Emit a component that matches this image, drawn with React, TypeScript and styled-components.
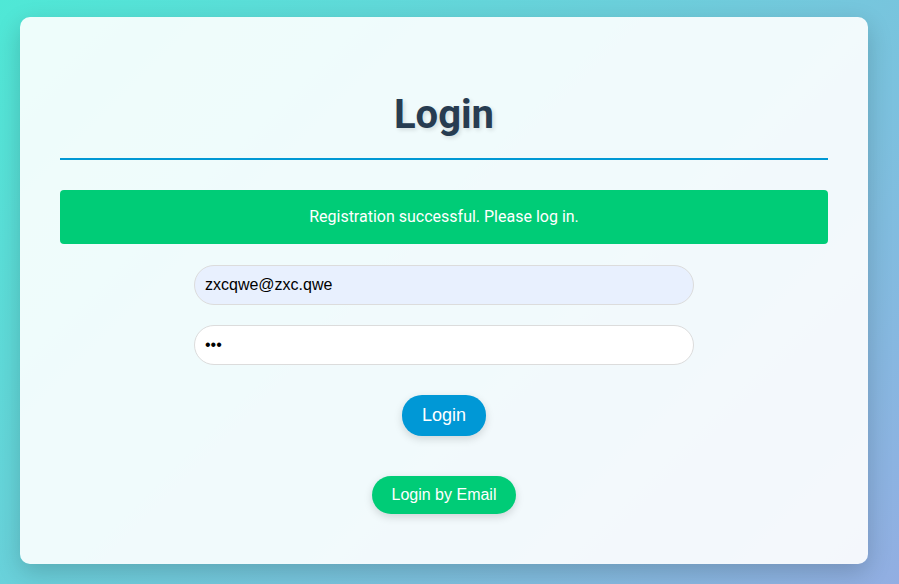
import React from "react";
import styled, { createGlobalStyle } from "styled-components";

const GlobalStyle = createGlobalStyle`
  html, body { margin: 0; padding: 0; height: 100%; }
  body {
    background: linear-gradient(135deg, #4fe8d6 0%, #92aee2 100%);
    font-family: Roboto, "Liberation Sans", sans-serif;
  }
  #root { height: 100%; }
`;

const Page = styled.div`
  box-sizing: border-box;
  height: 100%;
  padding: 17px 31px 20px 20px;
  display: flex;
`;

const Card = styled.div`
  flex: 1;
  box-sizing: border-box;
  background: rgba(255, 255, 255, 0.9);
  border-radius: 10px;
  box-shadow: 0 8px 24px rgba(0, 0, 0, 0.18);
  padding: 74px 40px 40px;
  display: flex;
  flex-direction: column;
  align-items: center;
`;

const Title = styled.h1`
  align-self: stretch;
  margin: 0;
  padding-bottom: 20px;
  border-bottom: 2px solid #0098d4;
  text-align: center;
  font-family: Roboto, sans-serif;
  font-weight: 700;
  font-size: 40px;
  line-height: 47px;
  color: #273c51;
  text-shadow: 2px 2px 4px rgba(0, 0, 0, 0.12);
`;

const Alert = styled.div`
  align-self: stretch;
  margin-top: 30px;
  padding: 15px;
  background: #00cc77;
  color: #ffffff;
  border-radius: 4px;
  text-align: center;
  font-family: Roboto, sans-serif;
  font-size: 16px;
  line-height: 24px;
`;

const Form = styled.form`
  display: flex;
  flex-direction: column;
  align-items: center;
  margin-top: 21px;
`;

const Input = styled.input<{ $filled?: boolean }>`
  box-sizing: border-box;
  width: 500px;
  height: 40px;
  margin-bottom: 20px;
  padding: 0 10px;
  border: 1px solid #dcdcdc;
  border-radius: 20px;
  background: ${(p) => (p.$filled ? "#e8f0fe" : "#ffffff")};
  font-family: "Liberation Sans", Arial, sans-serif;
  font-size: 16px;
  color: #000;
  outline: none;
`;

const Button = styled.button<{ $variant: "primary" | "success"; $size: number }>`
  border: none;
  border-radius: 20px;
  padding: 10px 20px;
  background: ${(p) => (p.$variant === "primary" ? "#0098d6" : "#00cc77")};
  color: #fff;
  font-family: "Liberation Sans", Arial, sans-serif;
  font-size: ${(p) => p.$size}px;
  box-shadow: 0 3px 8px rgba(0, 0, 0, 0.15);
  cursor: pointer;
`;

const PrimaryButton = styled(Button)`
  margin-top: 10px;
`;

const EmailButton = styled(Button)`
  margin-top: 40px;
`;

export default function App() {
  return (
    <>
      <GlobalStyle />
      <Page>
        <Card>
          <Title>Login</Title>
          <Alert>Registration successful. Please log in.</Alert>
          <Form onSubmit={(e) => e.preventDefault()}>
            <Input $filled type="email" defaultValue="zxcqwe@zxc.qwe" />
            <Input type="password" defaultValue="abc" />
            <PrimaryButton type="submit" $variant="primary" $size={18}>
              Login
            </PrimaryButton>
          </Form>
          <EmailButton type="button" $variant="success" $size={16}>
            Login by Email
          </EmailButton>
        </Card>
      </Page>
    </>
  );
}
